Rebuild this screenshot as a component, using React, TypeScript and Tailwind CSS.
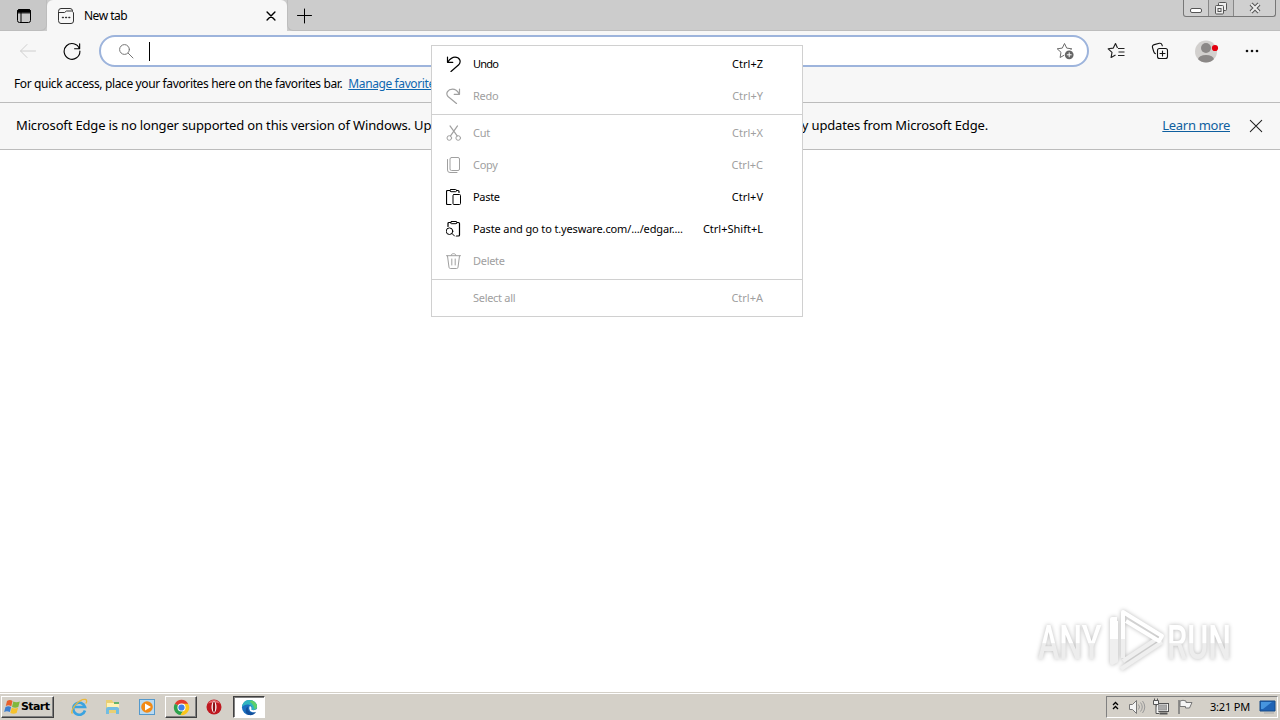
import React from 'react';

type P = { children: React.ReactNode; className?: string; s?: number };

function Ico({ children, className = '', s = 16 }: P) {
  return (
    <svg width={s} height={s} viewBox="0 0 16 16" fill="none" stroke="currentColor" strokeWidth="1" strokeLinecap="round" strokeLinejoin="round" className={'shrink-0 ' + className}>
      {children}
    </svg>
  );
}

function TabStrip() {
  return (
    <div className="flex h-[31px] bg-[#cccccc]">
      <div className="flex w-[47px] items-center justify-center rounded-br-md border-r border-b border-[#bdbdbd] bg-[#c8c8c8] pl-[2px]">
        <Ico className="mt-[1px] text-black">
          <rect x="1.500" y="1.500" width="13" height="13" rx="2" />
          <path d="M1.500 4.500V3.500a2 2 0 0 1 2-2h9a2 2 0 0 1 2 2v1Z" fill="currentColor" />
          <path d="M5 4v10.500" />
        </Ico>
      </div>
      <div className="flex h-[31px] w-[240px] items-center rounded-t-md bg-[#f7f7f7] pr-[9px] pl-[11px]">
        <Ico className="text-[#333]">
          <path d="M.5 3A2.500 2.500 0 0 1 3 .5h9A2.500 2.500 0 0 1 14.500 3v.5A2.500 2.500 0 0 1 15.500 5v8A2.500 2.500 0 0 1 13 15.500H3A2.500 2.500 0 0 1 .5 13ZM.5 4.500h6l2-1.500h5" />
          <path d="M4.500 9.500h.8M7.700 9.500h.8M10.900 9.500h.8" strokeWidth="1.500" />
        </Ico>
        <span className="ml-[10px] text-[12px] tracking-[-0.5px]">New tab</span>
        <Ico s={14} className="ml-auto text-black">
          <path d="m3.500 3.500 9 9M12.500 3.500l-9 9" strokeWidth="1.600" />
        </Ico>
      </div>
      <div className="flex flex-1 rounded-bl-md border-b border-l border-[#bdbdbd]">
        <Ico className="mt-[8px] ml-[9px] text-black">
          <path d="M7.500 1v14M.5 7.500h14" />
        </Ico>
        <div className="mr-[4px] ml-auto flex h-[17px] rounded-b-[3px] border border-t-0 border-[#777] bg-[#d0d0d0]">
          <div className="flex w-[25px] justify-center border-r border-[#888]">
            <svg width="12" height="17" fill="#fff" stroke="#555"><rect x=".5" y="8.500" width="11" height="4" rx="1.500" /></svg>
          </div>
          <div className="flex w-[25px] justify-center border-r border-[#888] bg-[#c6c6c6]">
            <svg width="14" height="17" fill="#eee" stroke="#555"><rect x="4.500" y="2.500" width="8" height="8" rx="1" /><rect x="1.500" y="5.500" width="8" height="8.500" rx="1" /><rect x="4" y="8.500" width="3" height="3" /></svg>
          </div>
          <div className="flex w-[41px] justify-center">
            <svg width="14" height="17" viewBox="0 0 14 17"><path d="m3 4 8 8M11 4l-8 8" stroke="#555" strokeWidth="4" /><path d="m3 4 8 8M11 4l-8 8" stroke="#eee" strokeWidth="2" /></svg>
          </div>
        </div>
      </div>
    </div>
  );
}

function Toolbar() {
  return (
    <div className="flex h-[40px] items-center">
      <Ico className="ml-[20px] text-[#cecece]"><path d="M15.500 8H.8M7 1.500.5 8 7 14.500" /></Ico>
      <Ico s={18} className="ml-[27px] text-black"><path d="M14.600 6A7 7 0 1 0 15 8M14.800 1.500V6h-4.500" /></Ico>
      <div className="ml-[18px] flex h-[32px] w-[990px] items-center rounded-full border-2 border-[#9db4dc] bg-white pr-[11px] pl-[17px]">
        <Ico className="text-[#757575]"><circle cx="6.500" cy="6.500" r="4.900" /><path d="m10.300 10.300 4.700 4.700" /></Ico>
        <div className="ml-[15px] h-[19px] w-px bg-black" />
        <svg width="20" height="18" viewBox="0 0 20 18" fill="none" className="ml-auto">
          <path d="M8.500 1.500 10.700 6.100 15.800 6.800 12 10.300 12.900 15.500 8.500 13 4.100 15.500 5 10.300 1.200 6.800 6.300 6.100Z" stroke="#6b6b6b" strokeLinejoin="round" />
          <circle cx="13.200" cy="12.800" r="5.200" fill="#fff" /><circle cx="13.200" cy="12.800" r="4.400" fill="#666" />
          <path d="M13.200 10.400v4.800M10.800 12.800h4.800" stroke="#fff" />
        </svg>
      </div>
      <svg width="18" height="18" viewBox="0 0 18 18" fill="none" stroke="#222" strokeWidth="1.150" strokeLinejoin="round" className="ml-[18px]">
        <path d="M10.500 6 8.500 1.500 6.300 6.100 1.200 6.800 5 10.300 4.100 15.500 8.500 13" />
        <path d="M11 6.500h6.500M11.500 10h6M11 13.500h6.500" />
      </svg>
      <svg width="18" height="18" viewBox="0 0 18 18" fill="none" stroke="#111" strokeWidth="1.100" strokeLinecap="round" className="ml-[26px]">
        <rect x="6.500" y="6.500" width="10" height="10" rx="2" /><path d="M11.500 9v5M9 11.500h5M4.500 11.700C3.600 11.400 3 10.500 2.700 9.500L1.500 5.500C1 4 2 3 3.300 2.600l5-1.300c1.300-.3 2.300.2 2.700 1.500l.3 1" />
      </svg>
      <svg width="26" height="24" viewBox="0 0 26 24" className="ml-[25px]">
        <defs><clipPath id="av"><circle cx="12" cy="12.500" r="11" /></clipPath></defs>
        <circle cx="12" cy="12.500" r="11" fill="#d2d0ce" />
        <g clipPath="url(#av)" fill="#8b8887"><circle cx="12" cy="9" r="5" /><ellipse cx="12" cy="20.500" rx="8" ry="4.500" /></g>
        <circle cx="21" cy="9" r="3.100" fill="#e3000f" />
      </svg>
      <svg width="16" height="4" className="ml-[24px]" fill="#111"><circle cx="3" cy="2" r="1.300" /><circle cx="8" cy="2" r="1.300" /><circle cx="13" cy="2" r="1.300" /></svg>
    </div>
  );
}

type Item = { label: string; keys?: string; icon?: React.ReactNode; on?: boolean; sep?: boolean; tight?: boolean };

const items: Item[] = [
  { label: 'Undo', keys: 'Ctrl+Z', on: true, tight: true, icon: <path d="M1.500 1v5.300h5.300M1.800 6C4 3 6 1.200 9 1.200c4.500 0 6.500 4 4 7.300L5 15.500" strokeWidth="1.200" /> },
  { label: 'Redo', keys: 'Ctrl+Y', icon: <path d="M13.500 1v5.300H8.200M13.200 6C11.500 3 9.500 1.200 6.500 1.200 2 1.200-.8 5.200 2 8.500l8.500 7" strokeWidth="1.200" /> },
  { label: 'Cut', keys: 'Ctrl+X', sep: true, icon: <><circle cx="3.300" cy="13" r="2.300" /><circle cx="12.200" cy="13" r="2.300" /><path d="M4.500 10.900 11.500.9M11.200 10.900 4 .9" strokeWidth="1.200" /></> },
  { label: 'Copy', keys: 'Ctrl+C', icon: <><rect x="4" y=".5" width="9.500" height="13" rx="1.500" /><path d="M1.500 2.500v10.500A2.500 2.500 0 0 0 4 15.500h7" /></> },
  { label: 'Paste', keys: 'Ctrl+V', on: true, icon: <><path d="M5 15.500H1.500A1 1 0 0 1 .5 14.500v-12A1 1 0 0 1 1.500 1.500h2.500M10.500 1.500H12a1 1 0 0 1 1 1v1" strokeWidth="1.200" /><rect x="4" y=".5" width="6.500" height="2.200" rx="1" /><rect x="7" y="5.500" width="7.500" height="10" rx="1" /></> },
  { label: 'Paste and go to t.yesware.com/.../edgar....', keys: 'Ctrl+Shift+L', on: true, icon: <><path d="M2 5.500V2.500A1 1 0 0 1 3 1.500H5M11 1.500h1.500a1 1 0 0 1 1 1v11.500a1 1 0 0 1-1 1H10.500" strokeWidth="1.200" /><rect x="4.500" y=".5" width="6.500" height="2.200" rx="1" /><circle cx="3.500" cy="10.200" r="3.300" /><path d="m6 12.500 2.500 2.500" /></> },
  { label: 'Delete', icon: <><path d="M.5 2.700h14M5 2.500C5-.1 10-.1 10 2.500M1.500 3l1.500 11.300q.2 1.200 1.300 1.200h6.400q1.100 0 1.300-1.200L13.500 3M5.800 6v6M9.200 6v6" /></> },
  { label: 'Select all', keys: 'Ctrl+A', sep: true },
];

function Menu() {
  return (
    <div className="absolute top-[45px] left-[431px] w-[372px] border border-[#d0d0d0] bg-white py-[2px] text-[11px]">
      {items.map((it) => (
        <div key={it.label}>
          {it.sep && <div className="mt-[2px] mb-[2px] h-px bg-[#d0d0d0]" />}
          <div className={'flex h-8 items-center pr-[39px] pl-[14px] whitespace-nowrap ' + (it.on ? 'text-black' : 'text-[#a0a0a0]')}>
            {it.icon ? <Ico>{it.icon}</Ico> : <span className="w-4" />}
            <span className={'ml-[11px] ' + (it.tight ? 'tracking-[-0.8px]' : it.label.length > 20 ? 'tracking-[-0.130px]' : 'tracking-[-0.3px]')}>{it.label}</span>
            <span className="ml-auto">{it.keys}</span>
          </div>
        </div>
      ))}
    </div>
  );
}

function Taskbar() {
  return (
    <div className="flex h-[28px] items-center border-t border-[#d4d0c8] bg-[#d4d0c8] shadow-[inset_0_1px_0_#fff]">
      <div className="mt-[1px] ml-[1px] flex h-[22px] w-[53px] items-center border border-t-white border-r-[#404040] border-b-[#404040] border-l-white pl-[2px] shadow-[inset_-1px_-1px_0_#808080]">
        <svg width="17" height="16" viewBox="0 0 17 16" className="shrink-0">
          <path d="M3 2q3-2 5.500 0L7.300 7.300Q4.500 5.500 1.800 7Z" fill="#e8602c" />
          <path d="M9.300 2.500q3 1.600 6.500 0L14.300 8q-3 1.600-6.300 0Z" fill="#80b83c" />
          <path d="M1.500 8q3-1.500 5.600 0L5.900 13Q3 11.500.1 12.900Z" fill="#3d7fd0" />
          <path d="M7.800 8.800q3 1.600 6.300 0l-1.500 5.200q-3 1.500-6.300 0Z" fill="#f6c22c" />
        </svg>
        <span className="mt-[1px] font-['DejaVu_Sans','Noto_Sans',sans-serif] text-[11px] font-bold tracking-[-0.6px]">Start</span>
      </div>
      <svg width="18" height="18" viewBox="0 0 18 18" className="mt-[1px] ml-[16px]" fill="none">
        <path d="M15 12.500A6 6 0 1 1 15 9H5" stroke="#3ba3e0" strokeWidth="2.600" />
        <path d="M2.500 15.500C-1 13 9 .5 15.500 1.500c2 .5 1 3 .3 4" stroke="#eab83c" strokeWidth="1.300" />
      </svg>
      <svg width="18" height="18" viewBox="0 0 18 18" className="mt-[1px] ml-[16px]">
        <path d="M2 2h6l1 2h6v11H2Z" fill="#e9cf74" /><path d="M3 5h12v5H3Z" fill="#fff2b4" /><path d="M10 4h5v2h-5Z" fill="#64b36a" />
        <path d="M2 16v-5q0-2 2-2h9q2 0 2 2v5h-3v-4H5v4Z" fill="#72bde2" />
      </svg>
      <svg width="18" height="18" viewBox="0 0 18 18" className="mt-[1px] ml-[16px]">
        <rect x="1.500" y="1.500" width="15" height="15" fill="#b9daf2" stroke="#5499cc" /><circle cx="9" cy="9" r="5.800" fill="#f28a16" /><path d="m7 5.500 6 3.500-6 3.500Z" fill="#fff" />
      </svg>
      <div className="mt-[1px] ml-[9px] flex h-[22px] w-[32px] items-center justify-center border border-t-white border-r-[#404040] border-b-[#404040] border-l-white shadow-[inset_-1px_-1px_0_#808080]">
        <svg width="17" height="17" viewBox="0 0 18 18">
          <path d="M9 9 2 5a8 8 0 0 1 14 0Z" fill="#e33b2e" /><path d="M9 9 2 5a8 8 0 0 0 6 12l4-6Z" fill="#2da24c" /><path d="M9 9V5h7a8 8 0 0 1-8 12l4-7Z" fill="#fbc51b" />
          <circle cx="9" cy="9" r="4.300" fill="#fff" /><circle cx="9" cy="9" r="3.300" fill="#3f7fe8" />
        </svg>
      </div>
      <svg width="18" height="18" viewBox="0 0 18 18" className="mt-[1px] ml-[8px]">
        <circle cx="9" cy="9" r="7.500" fill="#bf1820" /><path d="M3 5.500a7 7 0 0 1 12 0q-6-2-12 0Z" fill="#e4686b" /><ellipse cx="9" cy="9" rx="2.500" ry="5.800" fill="#fff" /><ellipse cx="9" cy="9" rx="1.200" ry="5.200" fill="#8d1016" />
      </svg>
      <div className="mt-[1px] ml-[10px] flex h-[22px] w-[32px] items-center justify-center border border-t-[#404040] border-r-white border-b-white border-l-[#404040] bg-white shadow-[inset_1px_1px_0_#808080]">
        <svg width="17" height="17" viewBox="0 0 18 18">
          <circle cx="9" cy="9" r="8" fill="#1a6fc0" />
          <path d="M1 8.500C2 3 5 1 9 1c5 0 8 3.500 8 7 0 3-3 4.500-6 3.500 1-1 1-2.500 0-3.800C9 5 4 5 1 8.500Z" fill="#2fb5c0" />
          <path d="M11 1.300q6 2 6 6.700 0 2.500-2.500 3.400Q14 6 9 3Z" fill="#5dd06a" />
          <path d="M7.500 8c-1 4 1.500 6.500 5 6.500 1.500 0 2.800-.5 3.500-1-2 3.500-5 4-8 3.500-4-2-4-7-.5-9Z" fill="#124f9b" />
          <path d="M9.300 7.500q2.800 1 1.500 3.700 2.500 1.500 6.200-.5v2q-2.500 2-5.500 1Q7.500 12 9.300 7.500Z" fill="#fff" />
        </svg>
      </div>
      <div className="mt-[1px] mr-[2px] ml-auto flex h-[22px] w-[172px] items-center border border-t-[#808080] border-r-white border-b-white border-l-[#808080] pl-[5px]">
        <svg width="8" height="12" fill="none" stroke="#000" strokeWidth="1.300"><path d="m1 4 2.500-2.500L6 4M1 8l2.500-2.500L6 8" /></svg>
        <svg width="18" height="18" viewBox="0 0 18 18" className="ml-[8px]" fill="#f4f4f4" stroke="#777"><path d="M1.500 6.500h3l4-4v13l-4-4h-3Z" /><path d="M10.500 6.500q2 2.500 0 5M12.500 4.500q3.500 4.500 0 9M14.500 3q4.500 6 0 12" fill="none" stroke="#999" /></svg>
        <svg width="18" height="18" viewBox="0 0 18 18" className="ml-[6px]" fill="#f5f5f5" stroke="#555"><rect x="4.500" y="5.500" width="12" height="8" /><rect x="6.500" y="7" width="8" height="5" fill="#aaa" stroke="#999" /><path d="M7.500 15.500h8" strokeWidth="2" /><path d="M1.500 2.500h5v4h-5ZM4 6.500v9h3" /><path d="M2.500 2V.5M5.500 2V.5" /></svg>
        <svg width="18" height="18" viewBox="0 0 18 18" className="ml-[6px]" fill="#f5f5f5" stroke="#777"><path d="M3 2v14" strokeWidth="1.500" /><path d="M4 3q3-1.500 6 0v1.500h6L13.500 10H9.500V8.500H4Z" /></svg>
        <span className="ml-[16px] text-[11px] tracking-[-0.2px] whitespace-nowrap">3:21 PM</span>
        <svg width="18" height="18" viewBox="0 0 18 18" className="ml-auto"><path d="M1 3h15v10H1Z" fill="#1f63b5" stroke="#174a86" /><path d="M2 4h11L4 11H2Z" fill="#4795de" /><path d="M5 15h10" stroke="#aaa" /></svg>
      </div>
    </div>
  );
}

function Watermark() {
  return (
    <svg width="250" height="76" viewBox="0 0 250 76" overflow="visible" className="drop-shadow-[0_0_2px_rgba(0,0,0,0.28)]">
      <defs><linearGradient id="wm" x1="0" y1="0" x2="0" y2="1"><stop offset="0.5" stopColor="#ffffff" /><stop offset="0.52" stopColor="#ededed" /></linearGradient></defs>
      <g fill="url(#wm)" className="font-['Roboto','Liberation_Sans',sans-serif] text-[48px] font-medium">
        <text transform="translate(8 57) scale(0.67 1)">ANY</text>
        <text transform="translate(137 57) scale(0.67 1)">RUN</text>
      </g>
      <g fill="none" strokeWidth="4" strokeLinejoin="round">
        <path d="M82 37v24l4-2V37M93 37v19M93 59l32-21M91 67l41-27" stroke="#efefef" />
        <path d="M93 37V10l39 24-3 5-33-20M82 37V17h5M86 37V19" stroke="#fff" />
      </g>
    </svg>
  );
}

export default function App() {
  return (
    <div className="relative flex h-[720px] w-[1280px] flex-col overflow-hidden bg-white font-['Noto_Sans','Open_Sans',sans-serif] text-black">
      <TabStrip />
      <div className="flex h-[72px] flex-col border-b border-[#bcbcbc] bg-[#f7f7f7]">
        <Toolbar />
        <div className="flex h-[26px] items-center pl-[14px] text-[12px] whitespace-nowrap">
          <span className="tracking-[-0.370px]">For quick access, place your favorites here on the favorites bar.</span>
          <a className="ml-[6px] tracking-[-0.4px] text-[#0f67b0] underline">Manage favorites now</a>
        </div>
      </div>
      <div className="flex h-[47px] items-center border-b border-[#bcbcbc] bg-[#f7f7f7] pl-[16px] text-[13px] whitespace-nowrap">
        <div className="flex w-[972px] justify-between tracking-[-0.160px]">
          <span>Microsoft Edge is no longer supported on this version of Windows. Upgrade</span>
          <span>security updates from Microsoft Edge.</span>
        </div>
        <a className="ml-auto tracking-[-0.3px] text-[#0f5f9f] underline">Learn more</a>
        <Ico s={14} className="mr-[17px] ml-[19px] text-[#222]"><path d="m1.500 1.500 13 13M14.500 1.500l-13 13" strokeWidth="1.200" /></Ico>
      </div>
      <div className="flex flex-1 items-end justify-end pb-[14px]">
        <Watermark />
      </div>
      <Taskbar />
      <Menu />
    </div>
  );
}
